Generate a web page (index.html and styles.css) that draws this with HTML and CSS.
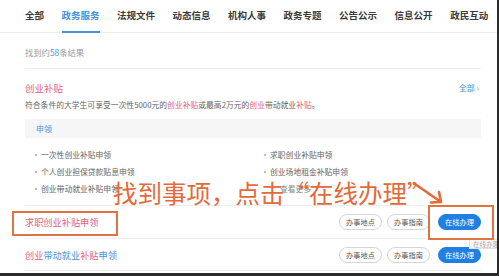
FILE: index.html
```html
<!DOCTYPE html>
<html lang="zh-CN">
<head>
<meta charset="utf-8">
<title>政务服务</title>
<link rel="stylesheet" href="styles.css">
</head>
<body>
<div class="page">
  <nav class="tabs">
    <span class="tab">全部</span>
    <span class="tab active">政务服务</span>
    <span class="tab">法规文件</span>
    <span class="tab">动态信息</span>
    <span class="tab">机构人事</span>
    <span class="tab">政务专题</span>
    <span class="tab">公告公示</span>
    <span class="tab">信息公开</span>
    <span class="tab">政民互动</span>
  </nav>
  <div class="content">
    <div class="count">找到约<span class="num">58</span>条结果</div>
    <section class="group">
      <div class="group-head">
        <span class="hl">创业补贴</span>
        <span class="more">全部 ›</span>
      </div>
      <p class="desc">符合条件的大学生可享受一次性5000元的<span class="hl">创业补贴</span>或最高2万元的<span class="hl">创业</span>带动就业<span class="hl">补贴</span>。</p>
      <div class="box"><span class="tag">申领</span></div>
      <ul class="list">
        <li>一次性创业补贴申领</li>
        <li>求职创业补贴申领</li>
        <li>个人创业担保贷款贴息申领</li>
        <li>创业场地租金补贴申领</li>
        <li>创业带动就业补贴申领</li>
        <li class="plain">查看更多</li>
      </ul>
    </section>
    <div class="row">
      <span class="title hl">求职创业补贴申领</span>
      <div class="actions">
        <span class="btn">办事地点</span>
        <span class="btn">办事指南</span>
        <span class="btn primary">在线办理</span>
      </div>
    </div>
    <div class="row">
      <span class="title"><span class="hl">创业</span><span class="link">带动就业</span><span class="hl">补贴</span><span class="link">申领</span></span>
      <div class="actions">
        <span class="btn">办事地点</span>
        <span class="btn">办事指南</span>
        <span class="btn primary">在线办理</span>
      </div>
    </div>
  </div>
  <div class="tooltip">在线办理</div>
  <div class="note">找到事项，点击“在线办理”</div>
  <svg class="arrow" width="34" height="28" viewBox="0 0 34 28">
    <path d="M3 4 L29 22 M29 22 L19 22.5 M29 22 L27 12" fill="none" stroke="#e4693b" stroke-width="2.6" stroke-linecap="round" stroke-linejoin="round"/>
  </svg>
  <div class="mark mark-title"></div>
  <div class="mark mark-btn"></div>
</div>
</body>
</html>
```

FILE: styles.css
```css
* { box-sizing: border-box; }
html, body { margin: 0; padding: 0; background: #fff; }
body {
  font-family: "Noto Sans CJK SC", "Noto Sans", "Liberation Sans", sans-serif;
  color: #555;
}
.page {
  position: relative;
  width: 499px;
  height: 276px;
  overflow: hidden;
  background: #fff;
  border-right: 2px solid #2b2b2b;
  border-bottom: 3px solid #2b2b2b;
}
.tabs {
  display: flex;
  gap: 17.5px;
  padding-left: 25px;
  height: 33px;
  border-bottom: 1px solid #eceef2;
}
.tab {
  font-size: 9.5px;
  font-weight: 700;
  color: #3a3a3a;
  line-height: 30px;
  height: 33px;
  white-space: nowrap;
}
.tab.active {
  color: #4593e0;
  border-bottom: 2px solid #4593e0;
}
.content {
  padding: 0 16px 0 25px;
}
.count {
  font-size: 8.3px;
  color: #9a9a9a;
  line-height: 12px;
  padding: 13px 0 10px;
  border-bottom: 1px solid #eceef2;
}
.num { color: #4593e0; }
.hl { color: #e8607a; }
.link { color: #4a93dc; }
.group { padding-top: 12px; }
.group-head {
  display: flex;
  justify-content: space-between;
  align-items: center;
  line-height: 14px;
  font-size: 9.5px;
  padding-right: 2px;
}
.more { color: #4593e0; font-size: 8px; }
.desc {
  margin: 4px 0 0;
  font-size: 7.8px;
  line-height: 12px;
  color: #666;
  white-space: nowrap;
}
.box {
  margin-top: 8px;
  height: 19px;
  background: #f5f6f8;
  padding-left: 11px;
  display: flex;
  align-items: center;
}
.tag { font-size: 8px; color: #4593e0; }
.list {
  list-style: none;
  margin: 8px 0 0;
  padding: 0 0 0 10px;
  display: grid;
  grid-template-columns: 229px 1fr;
  font-size: 7.8px;
  line-height: 17px;
  color: #666;
}
.list li {
  display: flex;
  align-items: center;
  white-space: nowrap;
}
.list li::before {
  content: "";
  width: 2px;
  height: 2px;
  border-radius: 50%;
  background: #aaa;
  margin-right: 4px;
}
.list li.plain::before { visibility: hidden; }
.list li.plain { padding-left: 10px; color: #888; }
.row {
  display: flex;
  align-items: center;
  justify-content: space-between;
  height: 33px;
  border-top: 1px solid #eceef2;
}
.row + .row { border-bottom: 1px solid #eceef2; }
.group + .row { margin-top: 8px; }
.title { font-size: 9.2px; white-space: nowrap; }
.actions { display: flex; gap: 5px; align-items: center; }
.btn {
  display: flex;
  align-items: center;
  justify-content: center;
  width: 43px;
  height: 16px;
  border: 1px solid #d6d6d6;
  border-radius: 8px;
  font-size: 7.2px;
  color: #555;
  background: #fff;
}
.btn.primary {
  margin-left: 3px;
  background: #1f7fe3;
  border-color: #1f7fe3;
  color: #fff;
}
.tooltip {
  position: absolute;
  left: 469px;
  top: 239px;
  height: 10px;
  padding: 0 3px;
  font-size: 6.5px;
  line-height: 9px;
  color: #aaa;
  border: 1px solid #e2e2e2;
  background: #fafafa;
  white-space: nowrap;
}
.note {
  position: absolute;
  left: 113px;
  top: 180px;
  font-size: 24.5px;
  line-height: 25px;
  color: #e4693b;
  white-space: nowrap;
}
.arrow {
  position: absolute;
  left: 412px;
  top: 180px;
}
.mark {
  position: absolute;
  border: 2px solid #df7443;
}
.mark-title { left: 12px; top: 211px; width: 106px; height: 25px; }
.mark-btn { left: 428px; top: 205px; width: 66px; height: 35px; }
```
